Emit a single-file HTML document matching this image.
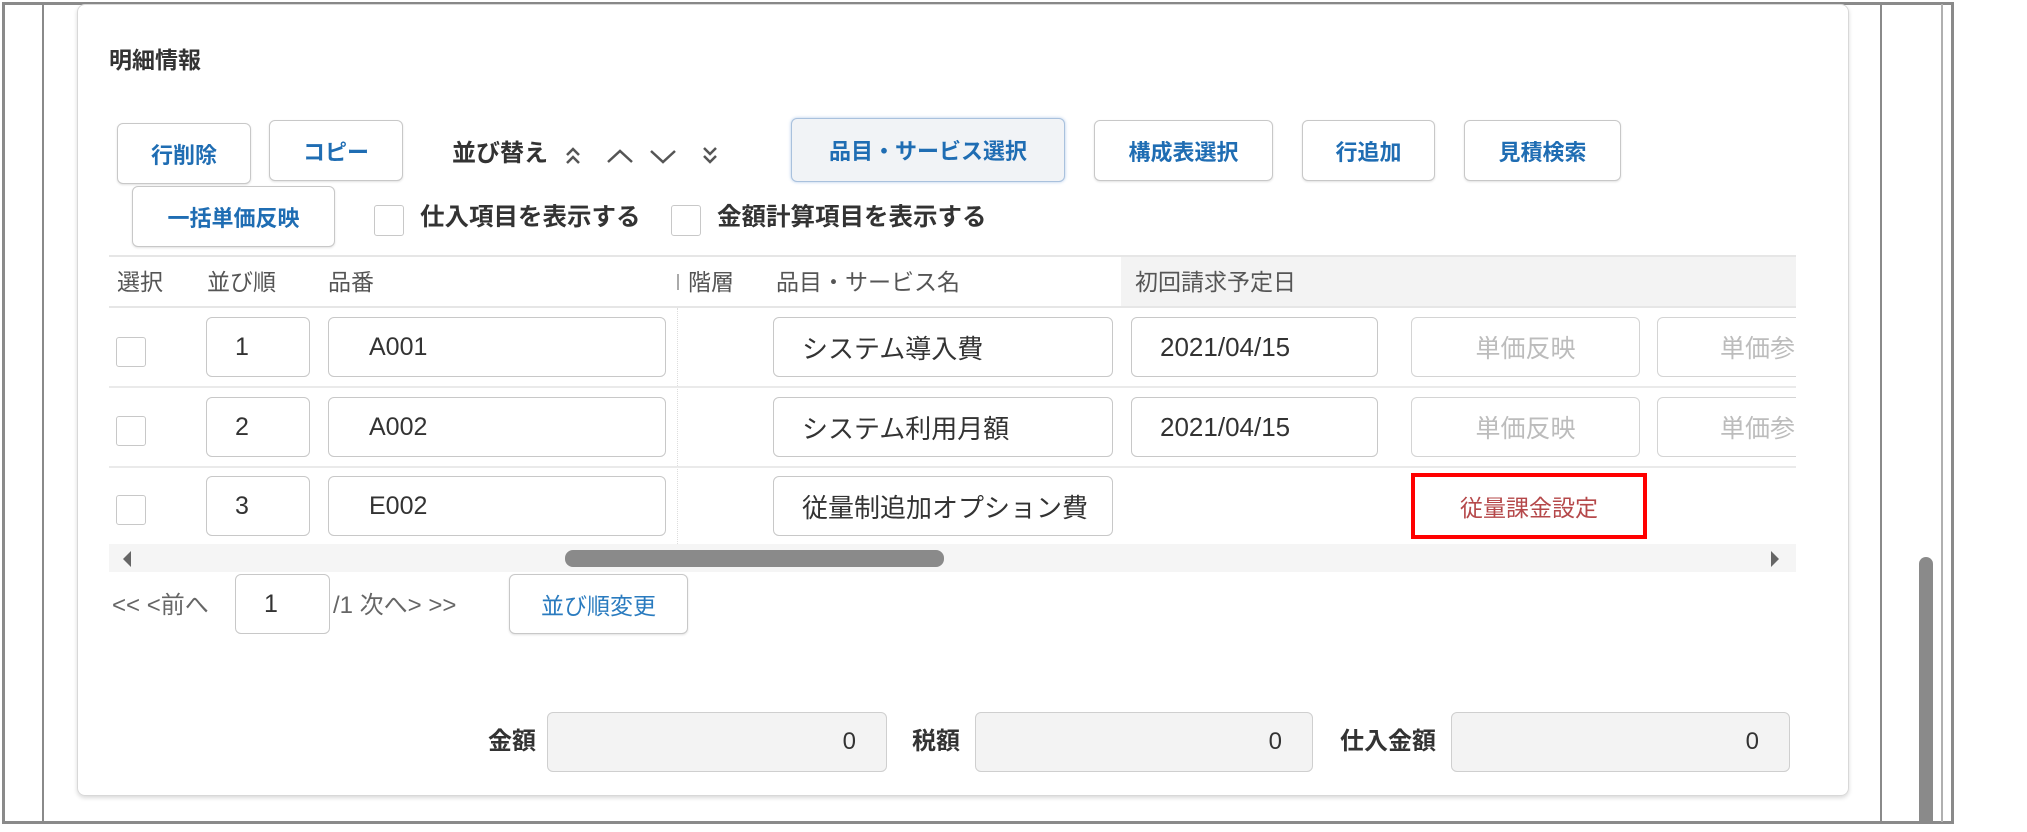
<!DOCTYPE html>
<html><head><meta charset="utf-8"><style>
*{box-sizing:border-box;margin:0;padding:0}
body{width:2027px;height:832px;background:#fff;position:relative;overflow:hidden;font-family:"Liberation Sans","Noto Sans CJK JP",sans-serif;color:#333}
.a{position:absolute}
.btn{position:absolute;border:1px solid #c8c8c8;border-radius:6px;background:#fff;color:#1f6db3;font-weight:bold;font-size:22px;display:flex;align-items:center;justify-content:center;box-shadow:0 1px 2px rgba(0,0,0,.12)}
.inp{position:absolute;border:1px solid #c8c8c8;border-radius:6px;background:#fff;font-size:25px;color:#333;display:flex;align-items:center;padding-left:30px}
.cb{position:absolute;width:30px;height:30px;border:1px solid #c8c8c8;border-radius:3px;background:#fff}
.lbl{position:absolute;font-size:24px;font-weight:bold;color:#333;line-height:28px}
.hd{position:absolute;font-size:23px;color:#555;top:268px;line-height:28px}
.dis{position:absolute;border:1px solid #d4d4d4;border-radius:6px;color:#bcbcbc;font-size:25px;display:flex;align-items:center;justify-content:center;background:#fff}
.tot{position:absolute;top:712px;height:60px;border:1px solid #cfcfcf;border-radius:6px;background:#f3f3f3;font-size:24px;display:flex;align-items:center;justify-content:flex-end;padding-right:30px}
</style></head><body>
<div class="a" style="left:2px;top:2px;width:1952px;height:822px;border:3px solid #8a8a8a"></div>
<div class="a" style="left:42px;top:4px;width:2px;height:818px;background:#8a8a8a"></div>
<div class="a" style="left:1880px;top:4px;width:2px;height:818px;background:#8a8a8a"></div>
<div class="a" style="left:1941px;top:4px;width:2px;height:818px;background:#b0b0b0"></div>
<div class="a" style="left:1919px;top:557px;width:14px;height:266px;background:#8a8a8a;border-radius:7px 7px 0 0"></div>
<div class="a" style="left:77px;top:4px;width:1772px;height:792px;border:1px solid #d8d8d8;border-radius:8px;box-shadow:0 2px 4px rgba(0,0,0,.15)"></div>
<div class="lbl" style="left:109px;top:46px;font-size:23px">明細情報</div>
<div class="btn" style="left:117px;top:123px;width:134px;height:61px">行削除</div>
<div class="btn" style="left:269px;top:120px;width:134px;height:61px">コピー</div>
<div class="lbl" style="left:452px;top:140px">並び替え</div>
<svg class="a" style="left:560px;top:138px" width="170" height="36" viewBox="0 0 170 36" fill="none" stroke="#555" stroke-width="2.5">
<path d="M7 17l6-6 6 6M7 25l6-6 6 6"/><path d="M48 24l12-11 12 11"/><path d="M91 13l12 11 12-11"/><path d="M144 10l6 6 6-6M144 18l6 6 6-6"/></svg>
<div class="btn" style="left:791px;top:118px;width:274px;height:64px;background:#f1f3f6;border-color:#a9c1dd;box-shadow:0 0 3px rgba(60,120,200,.4)">品目・サービス選択</div>
<div class="btn" style="left:1094px;top:120px;width:179px;height:61px">構成表選択</div>
<div class="btn" style="left:1302px;top:120px;width:133px;height:61px">行追加</div>
<div class="btn" style="left:1464px;top:120px;width:157px;height:61px">見積検索</div>
<div class="btn" style="left:132px;top:186px;width:203px;height:61px">一括単価反映</div>
<div class="cb" style="left:374px;top:205px;width:30px;height:31px"></div>
<div class="lbl" style="left:420px;top:204px;font-size:24.5px">仕入項目を表示する</div>
<div class="cb" style="left:671px;top:205px;width:30px;height:31px"></div>
<div class="lbl" style="left:717px;top:204px;font-size:24.5px">金額計算項目を表示する</div>
<div class="a" style="left:109px;top:255px;width:1687px;height:2px;background:#e6e6e6"></div>
<div class="a" style="left:1121px;top:257px;width:675px;height:50px;background:#f3f3f3"></div>
<div class="a" style="left:109px;top:306px;width:1687px;height:2px;background:#e6e6e6"></div>
<div class="hd" style="left:117px">選択</div>
<div class="hd" style="left:207px">並び順</div>
<div class="hd" style="left:328px">品番</div>
<div class="a" style="left:677px;top:274px;width:2px;height:16px;background:#aaa"></div>
<div class="hd" style="left:688px">階層</div>
<div class="hd" style="left:776px">品目・サービス名</div>
<div class="hd" style="left:1135px">初回請求予定日</div>
<div class="a" style="left:677px;top:308px;width:1px;height:236px;border-left:1px dotted #ddd"></div>
<div class="cb" style="left:116px;top:337px"></div>
<div class="inp" style="left:206px;top:317px;width:104px;height:60px;padding-left:28px">1</div>
<div class="inp" style="left:328px;top:317px;width:338px;height:60px;padding-left:40px">A001</div>
<div class="inp" style="left:773px;top:317px;width:340px;height:60px;padding-left:28px;font-size:26px">システム導入費</div>
<div class="inp" style="left:1131px;top:317px;width:247px;height:60px;padding-left:28px;font-size:26px">2021/04/15</div>
<div class="dis" style="left:1411px;top:317px;width:229px;height:60px">単価反映</div>
<div class="dis" style="left:1657px;top:317px;width:160px;height:60px;justify-content:flex-start;padding-left:62px">単価参</div>
<div class="a" style="left:109px;top:386px;width:1687px;height:2px;background:#eaeaea"></div>
<div class="cb" style="left:116px;top:416px"></div>
<div class="inp" style="left:206px;top:397px;width:104px;height:60px;padding-left:28px">2</div>
<div class="inp" style="left:328px;top:397px;width:338px;height:60px;padding-left:40px">A002</div>
<div class="inp" style="left:773px;top:397px;width:340px;height:60px;padding-left:28px;font-size:26px">システム利用月額</div>
<div class="inp" style="left:1131px;top:397px;width:247px;height:60px;padding-left:28px;font-size:26px">2021/04/15</div>
<div class="dis" style="left:1411px;top:397px;width:229px;height:60px">単価反映</div>
<div class="dis" style="left:1657px;top:397px;width:160px;height:60px;justify-content:flex-start;padding-left:62px">単価参</div>
<div class="a" style="left:109px;top:466px;width:1687px;height:2px;background:#eaeaea"></div>
<div class="cb" style="left:116px;top:495px"></div>
<div class="inp" style="left:206px;top:476px;width:104px;height:60px;padding-left:28px">3</div>
<div class="inp" style="left:328px;top:476px;width:338px;height:60px;padding-left:40px">E002</div>
<div class="inp" style="left:773px;top:476px;width:340px;height:60px;padding-left:28px;font-size:26px">従量制追加オプション費</div>
<div class="a" style="left:1411px;top:473px;width:236px;height:66px;border:4px solid #f00;color:#b5484a;font-size:23px;display:flex;align-items:center;justify-content:center">従量課金設定</div>
<div class="a" style="left:1796px;top:300px;width:50px;height:250px;background:#fff"></div>
<div class="a" style="left:109px;top:544px;width:1687px;height:28px;background:#f5f5f5"></div>
<div class="a" style="left:565px;top:550px;width:379px;height:17px;background:#8a8a8a;border-radius:8px"></div>
<svg class="a" style="left:120px;top:549px" width="14" height="20"><path d="M11 2L3 10l8 8z" fill="#666"/></svg>
<svg class="a" style="left:1768px;top:549px" width="14" height="20"><path d="M3 2l8 8-8 8z" fill="#666"/></svg>
<div class="a" style="left:112px;top:592px;font-size:24px;color:#666;line-height:28px">&lt;&lt; &lt;前へ</div>
<div class="inp" style="left:235px;top:574px;width:95px;height:60px;padding-left:28px">1</div>
<div class="a" style="left:333px;top:592px;font-size:24px;color:#666;line-height:28px">/1 次へ&gt; &gt;&gt;</div>
<div class="btn" style="left:509px;top:574px;width:179px;height:60px;font-weight:normal;color:#2a7bbf;font-size:23px">並び順変更</div>
<div class="lbl" style="left:488px;top:728px">金額</div>
<div class="tot" style="left:547px;width:340px">0</div>
<div class="lbl" style="left:912px;top:728px">税額</div>
<div class="tot" style="left:975px;width:338px">0</div>
<div class="lbl" style="left:1340px;top:728px">仕入金額</div>
<div class="tot" style="left:1451px;width:339px">0</div>
</body></html>
